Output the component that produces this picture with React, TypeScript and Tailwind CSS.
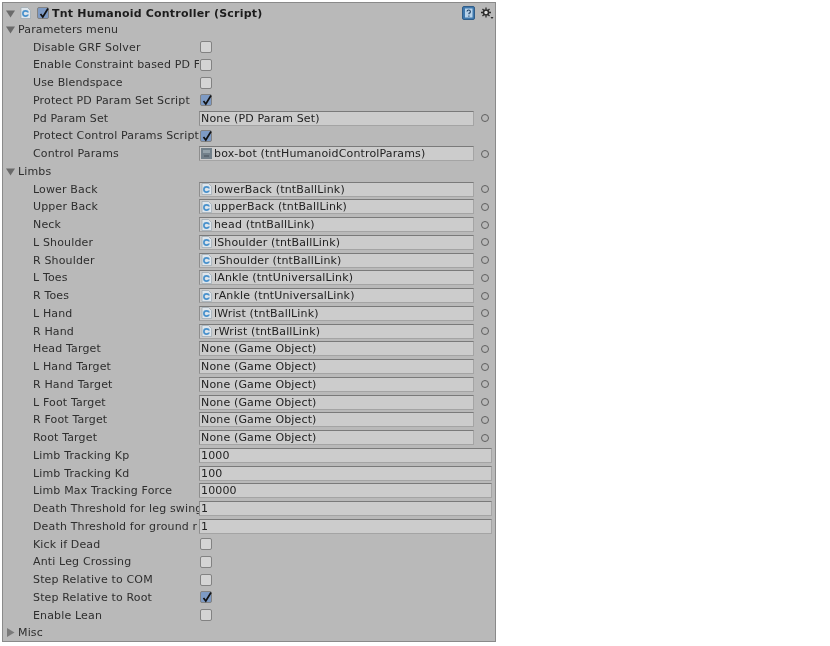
import { ReactNode } from "react";

type Row =
  | { kind: "check"; label: string; checked?: boolean }
  | { kind: "object"; label: string; value: string; icon?: "script" | "asset" }
  | { kind: "number"; label: string; value: string }
  | { kind: "section"; label: string; open: boolean };

const rows: Row[] = [
  { kind: "section", label: "Parameters menu", open: true },
  { kind: "check", label: "Disable GRF Solver" },
  { kind: "check", label: "Enable Constraint based PD F" },
  { kind: "check", label: "Use Blendspace" },
  { kind: "check", label: "Protect PD Param Set Script", checked: true },
  { kind: "object", label: "Pd Param Set", value: "None (PD Param Set)" },
  { kind: "check", label: "Protect Control Params Script", checked: true },
  { kind: "object", label: "Control Params", value: "box-bot (tntHumanoidControlParams)", icon: "asset" },
  { kind: "section", label: "Limbs", open: true },
  { kind: "object", label: "Lower Back", value: "lowerBack (tntBallLink)", icon: "script" },
  { kind: "object", label: "Upper Back", value: "upperBack (tntBallLink)", icon: "script" },
  { kind: "object", label: "Neck", value: "head (tntBallLink)", icon: "script" },
  { kind: "object", label: "L Shoulder", value: "lShoulder (tntBallLink)", icon: "script" },
  { kind: "object", label: "R Shoulder", value: "rShoulder (tntBallLink)", icon: "script" },
  { kind: "object", label: "L Toes", value: "lAnkle (tntUniversalLink)", icon: "script" },
  { kind: "object", label: "R Toes", value: "rAnkle (tntUniversalLink)", icon: "script" },
  { kind: "object", label: "L Hand", value: "lWrist (tntBallLink)", icon: "script" },
  { kind: "object", label: "R Hand", value: "rWrist (tntBallLink)", icon: "script" },
  { kind: "object", label: "Head Target", value: "None (Game Object)" },
  { kind: "object", label: "L Hand Target", value: "None (Game Object)" },
  { kind: "object", label: "R Hand Target", value: "None (Game Object)" },
  { kind: "object", label: "L Foot Target", value: "None (Game Object)" },
  { kind: "object", label: "R Foot Target", value: "None (Game Object)" },
  { kind: "object", label: "Root Target", value: "None (Game Object)" },
  { kind: "number", label: "Limb Tracking Kp", value: "1000" },
  { kind: "number", label: "Limb Tracking Kd", value: "100" },
  { kind: "number", label: "Limb Max Tracking Force", value: "10000" },
  { kind: "number", label: "Death Threshold for leg swing", value: "1" },
  { kind: "number", label: "Death Threshold for ground r", value: "1" },
  { kind: "check", label: "Kick if Dead" },
  { kind: "check", label: "Anti Leg Crossing" },
  { kind: "check", label: "Step Relative to COM" },
  { kind: "check", label: "Step Relative to Root", checked: true },
  { kind: "check", label: "Enable Lean" },
  { kind: "section", label: "Misc", open: false },
];

function Arrow({ open }: { open: boolean }) {
  return (
    <svg width="9" height="9" viewBox="0 0 9 9" className="shrink-0">
      {open ? <path d="M0 1.5h9L4.5 8.5z" fill="#6a6a6a" /> : <path d="M1 0l7.5 4.5L1 9z" fill="#7a7a7a" />}
    </svg>
  );
}

function CheckBox({ checked }: { checked?: boolean }) {
  return (
    <span
      className={`relative block w-[12px] h-[12px] rounded-[2px] border border-[#828282] ${
        checked ? "bg-[#7d9ac4]" : "bg-[#d4d4d4]"
      }`}
    >
      {checked && (
        <svg width="14" height="14" viewBox="0 0 14 14" className="absolute -left-[1px] -top-[2px]">
          <path d="M3.500 8l2.300 3L11 2.500" fill="none" stroke="#111111" strokeWidth="1.700" />
        </svg>
      )}
    </span>
  );
}

function ScriptIcon() {
  return (
    <svg width="11" height="12" viewBox="0 0 11 12" className="shrink-0">
      <path d="M1 .5h6.500L10.500 3.500v8H1z" fill="#dfe6ec" stroke="#9aa6b0" strokeWidth="0.700" />
      <circle cx="5.500" cy="6.500" r="2.600" fill="none" stroke="#4a92cc" strokeWidth="1.700" />
      <path d="M6 5.500h3v2H6.500z" fill="#dfe6ec" />
    </svg>
  );
}

function AssetIcon() {
  return (
    <svg width="11" height="11" viewBox="0 0 11 11" className="shrink-0">
      <rect width="11" height="11" fill="#72808a" />
      <path d="M2 2h7v3H2z" fill="#94a2aa" />
      <path d="M3 7h5v2H3z" fill="#5c6872" />
    </svg>
  );
}

function Field({ children }: { children: ReactNode }) {
  return (
    <div className="flex items-center flex-1 min-w-0 h-[15px] pl-[1px] bg-[#cccccc] border border-[#a4a4a4] border-t-[#7a7a7a] border-l-[#8e8e8e] text-[#222222] whitespace-nowrap overflow-hidden">
      {children}
    </div>
  );
}

function Picker() {
  return (
    <span className="flex items-center justify-center w-[18px] shrink-0 pl-[4px]">
      <span className="block w-[8px] h-[8px] rounded-full border-[1.5px] border-[#5f5f5f]" />
    </span>
  );
}

function InspectorRow({ row }: { row: Row }) {
  if (row.kind === "section") {
    return (
      <div className="flex items-center h-[17.76px] pl-[3px] gap-[3px] text-[#2e2e2e]">
        <Arrow open={row.open} />
        <span>{row.label}</span>
      </div>
    );
  }
  return (
    <div className="flex items-center h-[17.76px] pl-[30px] pr-[3px]">
      <span className="w-[166px] shrink-0 overflow-hidden whitespace-nowrap text-[#2e2e2e]">{row.label}</span>
      {row.kind === "check" && (
        <span className="pl-[0.5px]">
          <CheckBox checked={row.checked} />
        </span>
      )}
      {row.kind === "object" && (
        <>
          <Field>
            {row.icon === "script" && <ScriptIcon />}
            {row.icon === "asset" && <AssetIcon />}
            <span className={row.icon ? "pl-[2px]" : ""}>{row.value}</span>
          </Field>
          <Picker />
        </>
      )}
      {row.kind === "number" && <Field>{row.value}</Field>}
    </div>
  );
}

export default function App() {
  return (
    <div className="w-[830px] h-[646px] bg-white pt-[2px] pl-[2px] font-['DejaVu_Sans',sans-serif] text-[11px] leading-none tracking-[0.15px]">
      <div className="w-[494px] h-[640px] bg-[#b9b9b9] border border-[#8a8a8a] blur-[0.4px]">
        <div className="flex items-center h-[15px] mt-[2.5px] pl-[3px] pr-[1px]">
          <Arrow open />
          <span className="ml-[5px]">
            <ScriptIcon />
          </span>
          <span className="ml-[6px]">
            <CheckBox checked />
          </span>
          <span className="ml-[3px] font-bold text-[#1c1c1c] tracking-[0.2px]">Tnt Humanoid Controller (Script)</span>
          <span className="ml-auto flex items-center gap-[5px]">
            <svg width="13" height="14" viewBox="0 0 13 14">
              <rect x="0.500" y="0.500" width="12" height="13" rx="1.500" fill="#3f78ad" stroke="#2f5c88" />
              <rect x="3" y="2.500" width="7.500" height="9" fill="#b9d3ea" />
              <path d="M5 5.500a1.700 1.700 0 1 1 2 1.800v1M6.900 9.500v1.200" fill="none" stroke="#1d3f63" strokeWidth="1.100" />
            </svg>
            <svg width="14" height="13" viewBox="0 0 14 13">
              <circle cx="6" cy="5.500" r="2.500" fill="#dddddd" stroke="#2a2a2a" strokeWidth="1.500" />
              <path d="M6 .5v2M6 8.500v2M1 5.500h2M9 5.500h2M2.500 2l1.400 1.400M8.100 7.600l1.400 1.400M2.500 9l1.400-1.400M8.100 3.400L9.500 2" stroke="#2a2a2a" strokeWidth="1.300" />
              <path d="M10.500 10h3L12 12z" fill="#2a2a2a" />
            </svg>
          </span>
        </div>
        {rows.map((row) => (
          <InspectorRow key={row.label} row={row} />
        ))}
      </div>
    </div>
  );
}
